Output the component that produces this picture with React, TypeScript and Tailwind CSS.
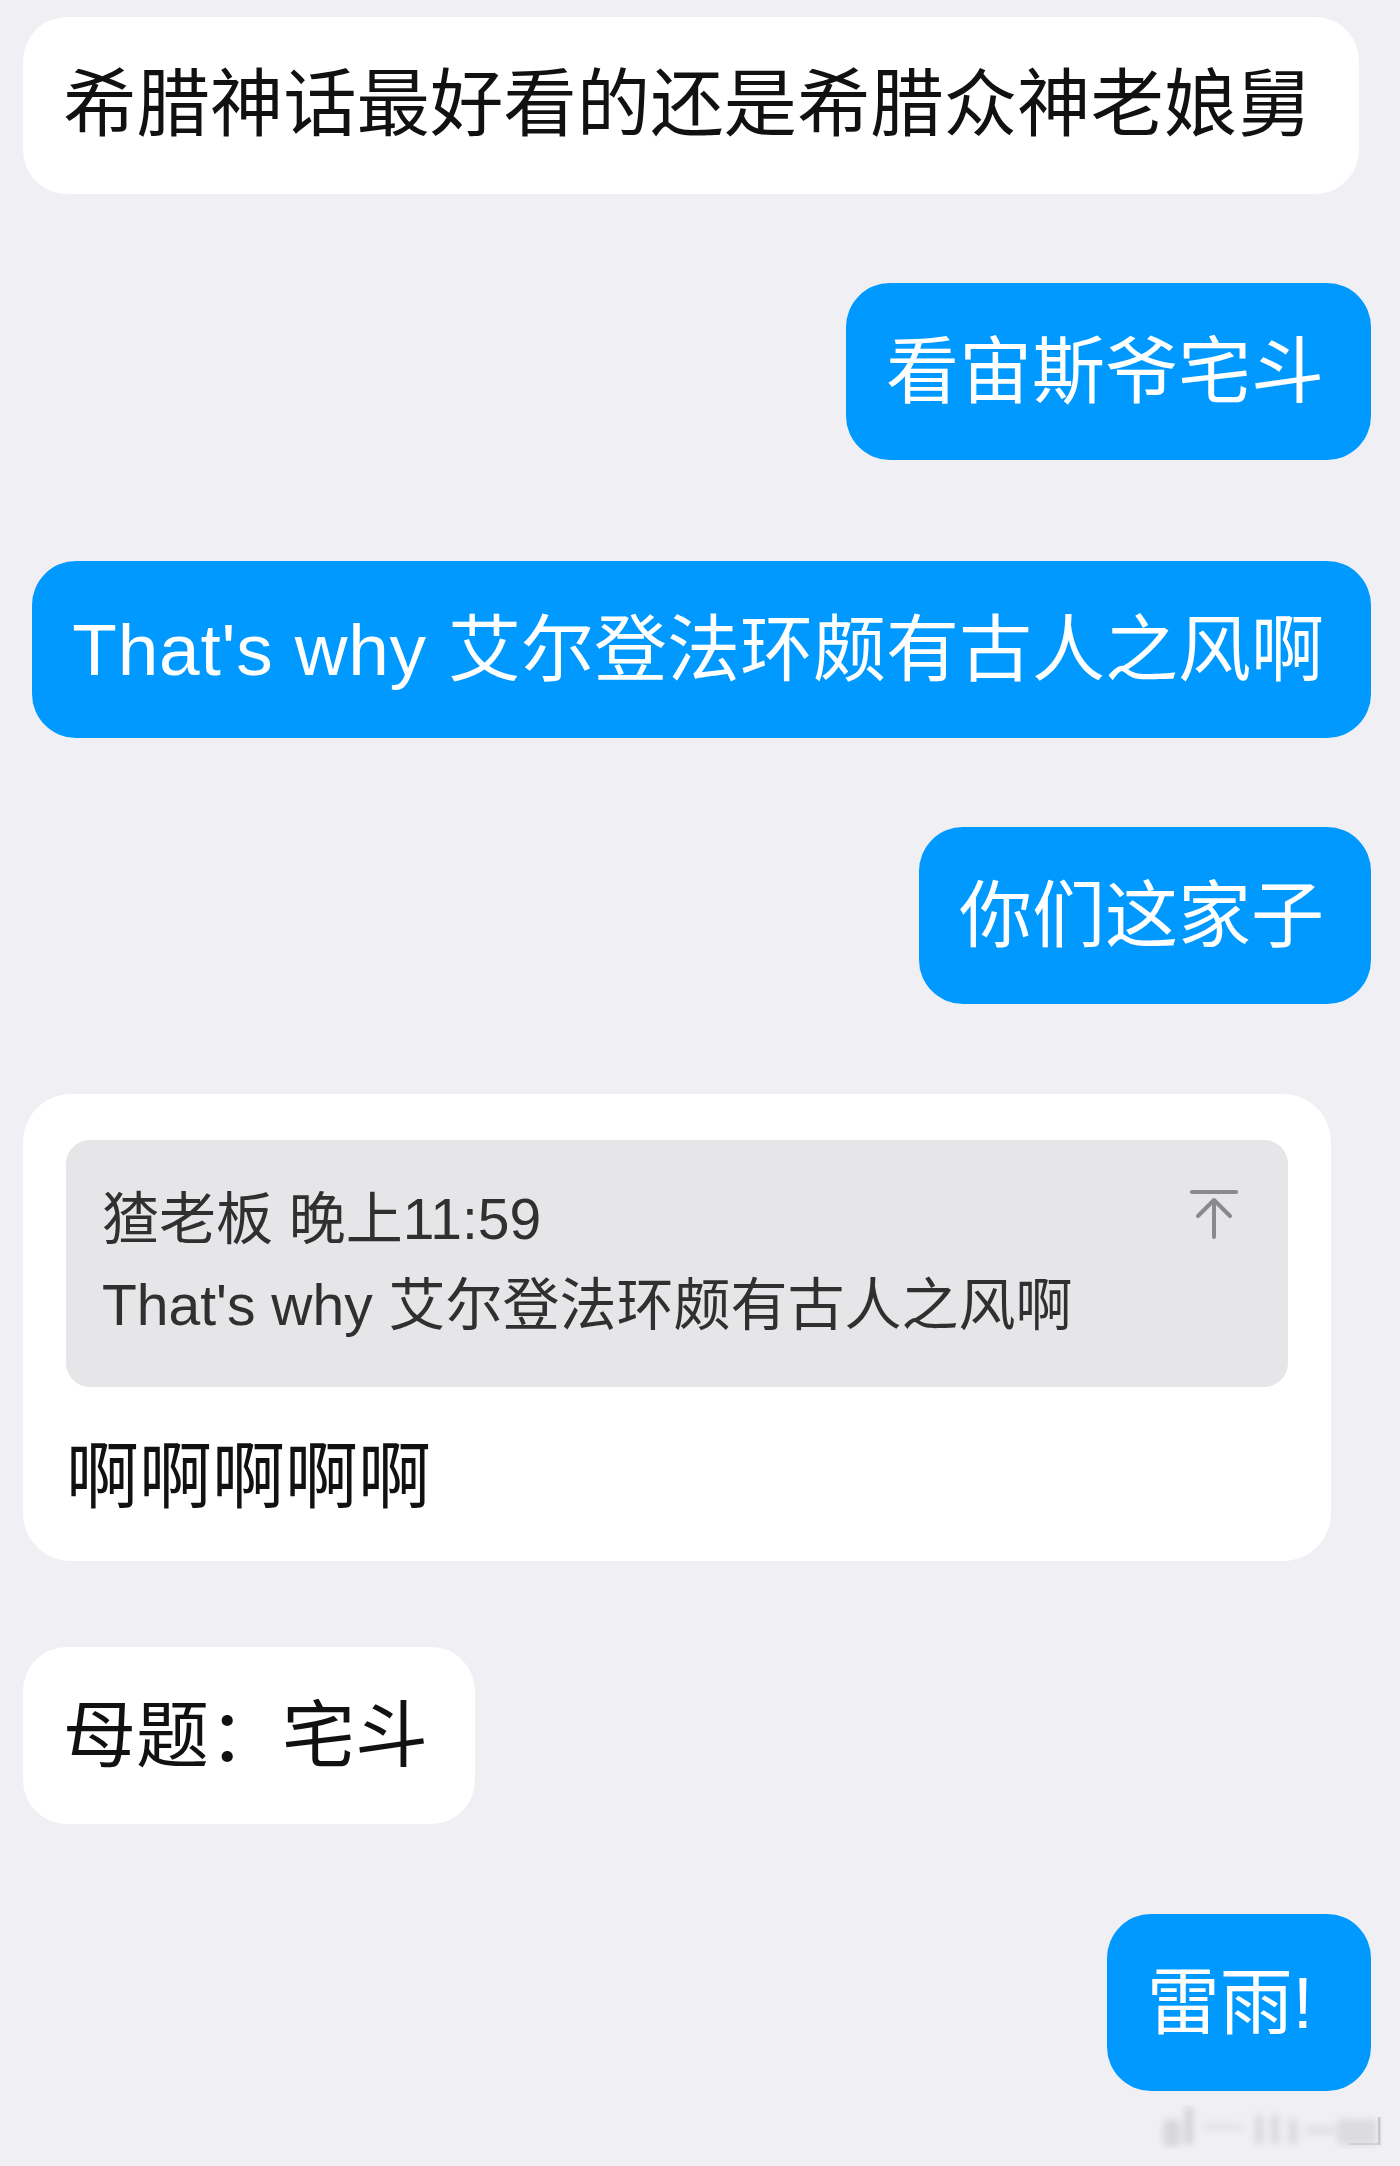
import React from "react";

const white =
  "bg-white text-[#111111] rounded-[44px] pl-[40px] pr-[47px] py-[38px] text-[73px] leading-[101px] whitespace-nowrap";
const blue =
  "bg-[#0099ff] text-white rounded-[44px] pl-[40px] pr-[47px] py-[38px] text-[73px] leading-[101px] whitespace-nowrap";

function TopArrow() {
  return (
    <svg width="48" height="50" viewBox="0 0 48 50" fill="none" className="shrink-0 mt-[13px]">
      <path d="M2 3H46" stroke="#8a8a8c" strokeWidth="4" strokeLinecap="round" />
      <path d="M24 12V48" stroke="#8a8a8c" strokeWidth="4" strokeLinecap="round" />
      <path d="M8 27L24 11L40 27" stroke="#8a8a8c" strokeWidth="4" strokeLinecap="round" strokeLinejoin="round" />
    </svg>
  );
}

function Watermark() {
  return (
    <svg width="224" height="44" viewBox="0 0 224 44" className="self-end -mr-[12px] mt-[14px]">
      <defs>
        <filter id="b" x="-20%" y="-50%" width="140%" height="200%">
          <feGaussianBlur stdDeviation="3.5" />
        </filter>
      </defs>
      <g filter="url(#b)" fill="#d8d8dc">
        <rect x="4" y="14" width="18" height="28" rx="6" />
        <rect x="26" y="2" width="8" height="38" rx="3" fill="#d2d2d6" />
        <rect x="44" y="18" width="40" height="8" rx="3" fill="#e4e4e8" />
        <rect x="96" y="10" width="8" height="30" rx="3" />
        <rect x="112" y="10" width="8" height="30" rx="3" />
        <rect x="130" y="14" width="8" height="26" rx="3" />
        <rect x="146" y="20" width="30" height="10" rx="3" fill="#e2e2e6" />
        <rect x="178" y="14" width="40" height="26" rx="3" fill="#dcdce0" />
      </g>
      <rect x="219" y="12" width="2.5" height="28" fill="#c8c8cc" />
      <rect x="190" y="38" width="32" height="2" fill="#d0d0d4" />
    </svg>
  );
}

export default function App() {
  return (
    <div className="min-h-[2166px] bg-[#f0f0f4] pl-[23px] pr-[29px] pt-[17px] flex flex-col font-['Liberation_Sans','Noto_Sans_CJK_SC',sans-serif]">
      <div className={`self-start ${white} !text-[73.4px] !pr-[48px]`}>希腊神话最好看的还是希腊众神老娘舅</div>

      <div className={`self-end mt-[89px] ${blue}`}>看宙斯爷宅斗</div>

      <div className={`self-end mt-[101px] ${blue}`}>
        <span className="tracking-[0.8px]">That's why </span>艾尔登法环颇有古人之风啊
      </div>

      <div className={`self-end mt-[89px] ${blue}`}>你们这家子</div>

      <div className="self-start mt-[90px] bg-white rounded-[48px] px-[43px] pt-[46px] pb-[34px] flex flex-col">
        <div className="w-[1222px] bg-[#e6e6e8] rounded-[24px] pl-[36px] pr-[50px] pt-[36px] pb-[39px] flex items-start justify-between">
          <div className="text-[57px] leading-[86px] text-[#303030] whitespace-nowrap">
            <div>猹老板 晚上11:59</div>
            <div>That's why 艾尔登法环颇有古人之风啊</div>
          </div>
          <TopArrow />
        </div>
        <div className="mt-[39px] text-[73px] leading-[101px] text-[#111111] whitespace-nowrap">啊啊啊啊啊</div>
      </div>

      <div className={`self-start mt-[86px] ${white}`}>母题：宅斗</div>

      <div className="self-end mt-[90px] bg-[#0099ff] text-white rounded-[44px] pl-[40px] pr-[58px] py-[38px] text-[73px] leading-[101px] whitespace-nowrap">
        雷雨!
      </div>

      <Watermark />
    </div>
  );
}
